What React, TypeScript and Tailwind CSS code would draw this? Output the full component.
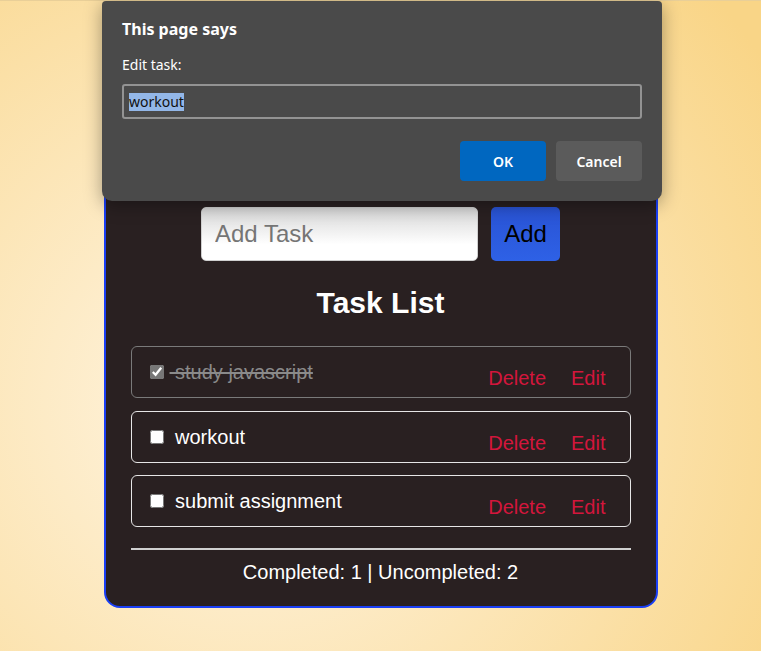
import { useState } from 'react';

type Task = { id: number; text: string; done: boolean };

const initialTasks: Task[] = [
  { id: 1, text: 'study javascript', done: true },
  { id: 2, text: 'workout', done: false },
  { id: 3, text: 'submit assignment', done: false },
];

function PromptDialog() {
  return (
    <div
      className="absolute left-[102px] top-0 z-10 h-[200px] w-[560px] rounded-b-[10px] rounded-t-[4px] bg-[#4a4a4a] px-[20px] pt-[17px] text-white shadow-[0_4px_18px_rgba(0,0,0,0.35)]"
      style={{ fontFamily: '"Noto Sans", "Open Sans", sans-serif' }}
      role="dialog"
    >
      <p className="text-[16px] font-bold leading-[22px]">This page says</p>
      <p className="mt-[15px] text-[14px] leading-[20px]">Edit task:</p>
      <div className="mt-[9px] flex h-[35px] items-center rounded-[3px] border-2 border-[#939393] px-[5px] text-[14px]">
        <span className="bg-[#93b7e8] leading-[18px] text-[#111]">workout</span>
      </div>
      <div className="mt-[22px] flex justify-end gap-[10px]">
        <button
          type="button"
          className="h-[40px] w-[86px] rounded-[4px] bg-[#0067c0] text-[14px] font-semibold text-white"
        >
          OK
        </button>
        <button
          type="button"
          className="h-[40px] w-[86px] rounded-[4px] bg-[#5b5b5b] text-[14px] font-semibold text-white"
        >
          Cancel
        </button>
      </div>
    </div>
  );
}

function TaskItem({ task, onToggle }: { task: Task; onToggle: () => void }) {
  return (
    <li
      className={
        task.done
          ? 'flex h-[52px] items-center justify-between rounded-[6px] border border-[#7a7a7a] pl-[18px]'
          : 'flex h-[52px] items-center justify-between rounded-[6px] border border-[#e6e6e6] pl-[18px]'
      }
    >
      <label className="flex items-center">
        <input
          type="checkbox"
          checked={task.done}
          onChange={onToggle}
          className="m-0 h-[14px] w-[14px] accent-[#777777]"
        />
        {/* leading space is struck through too, like the original */}
        <span
          className={
            task.done
              ? 'ml-[6px] text-[20px] leading-[24px] text-[#8a8a8a] line-through'
              : 'ml-[6px] text-[20px] leading-[24px] text-white'
          }
        >
          {'\u00a0' + task.text}
        </span>
      </label>
      <div className="flex gap-[25px] pr-[24px] pt-[12px] text-[20px] leading-[24px] text-[#d3163c]">
        <button type="button">Delete</button>
        <button type="button">Edit</button>
      </div>
    </li>
  );
}

export default function App() {
  const [tasks, setTasks] = useState<Task[]>(initialTasks);
  const completed = tasks.filter((t) => t.done).length;

  function toggle(id: number) {
    setTasks((list) => list.map((t) => (t.id === id ? { ...t, done: !t.done } : t)));
  }

  return (
    <div
      className="relative flex min-h-[651px] flex-col items-center border-t border-[#e9cf98] bg-[radial-gradient(circle_at_33%_62%,#fff6e6_0%,#f9d587_95%)]"
      style={{ fontFamily: '"Liberation Sans", Arial, sans-serif' }}
    >
      <PromptDialog />

      <div className="mt-[95px] w-[554px] rounded-[16px] border-2 border-[#1a3ff5] bg-[#292021] px-[25px] pb-[22px] pt-[24px] text-white">
        <h1 className="mb-[48px] text-center text-[32px] font-bold leading-[37px]">To-Do List</h1>

        <div className="flex justify-center gap-[13px]">
          <input
            type="text"
            placeholder="Add Task"
            className="h-[54px] w-[277px] rounded-[5px] border border-[#cfcfcf] bg-[linear-gradient(to_bottom,#d6d6d6,#ffffff_70%)] px-[13px] text-[24px] text-black placeholder:text-[#757575]"
          />
          <button
            type="button"
            className="h-[54px] w-[69px] rounded-[5px] bg-[linear-gradient(to_bottom,#2953d4,#2e61e6)] text-[24px] text-black"
          >
            Add
          </button>
        </div>

        <h2 className="mt-[25px] text-center text-[30px] font-bold leading-[34px]">Task List</h2>

        <ul className="mt-[26px] flex flex-col gap-[12.5px]">
          {tasks.map((t) => (
            <TaskItem key={t.id} task={t} onToggle={() => toggle(t.id)} />
          ))}
        </ul>

        <hr className="mt-[21px] border-t-2 border-[#d0d0d0]" />

        <p className="mt-[10px] text-center text-[20px] leading-[24px]">
          Completed: {completed} | Uncompleted: {tasks.length - completed}
        </p>
      </div>
    </div>
  );
}
